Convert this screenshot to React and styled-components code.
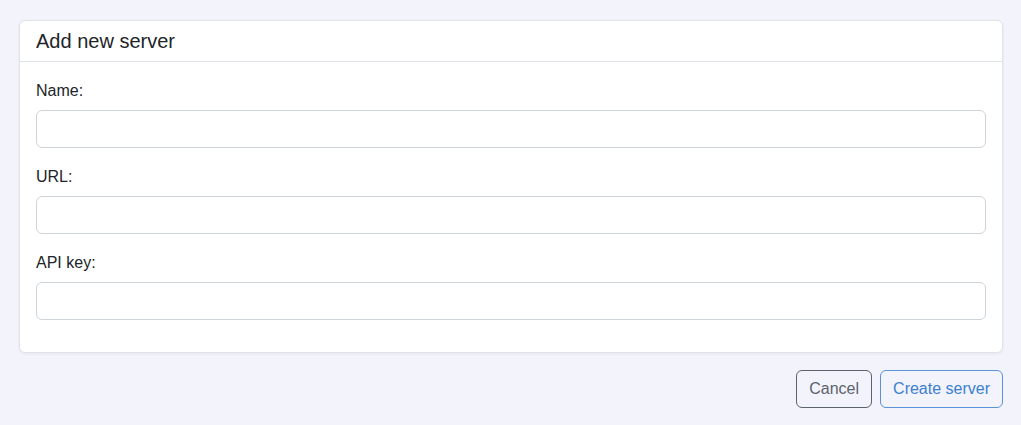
import React from "react";
import styled, { createGlobalStyle } from "styled-components";

const GlobalStyle = createGlobalStyle`
  html, body {
    margin: 0;
    padding: 0;
    background: #f3f3fc;
    font-family: "Liberation Sans", Arial, sans-serif;
    color: #212529;
  }
  * { box-sizing: border-box; }
`;

const Page = styled.div`
  padding: 20px 18px 18px 19px;
  display: flex;
  flex-direction: column;
  gap: 17px;
`;

const Card = styled.div`
  background: #fff;
  border: 1px solid #e1e2e8;
  border-radius: 6px;
  box-shadow: 0 1px 3px rgba(0, 0, 0, 0.06);
`;

const CardHeader = styled.div`
  height: 41px;
  padding: 0 16px;
  display: flex;
  align-items: center;
  border-bottom: 1px solid #dee2e6;
`;

const Title = styled.h2`
  margin: 0;
  font-size: 20px;
  font-weight: 400;
  color: #212529;
`;

const CardBody = styled.div`
  padding: 16px;
`;

const Field = styled.div`
  display: flex;
  flex-direction: column;
  gap: 8px;
  margin-bottom: 16px;
`;

const Label = styled.label`
  font-size: 16px;
  line-height: 24px;
  padding-top: 1px;
  color: #212529;
`;

const Input = styled.input`
  height: 38px;
  width: 100%;
  margin-top: -1px;
  border: 1px solid #ced4da;
  border-radius: 6px;
  padding: 6px 12px;
  font-size: 16px;
  font-family: inherit;
  background: #fff;
  outline: none;
`;

const Actions = styled.div`
  display: flex;
  justify-content: flex-end;
  gap: 8px;
`;

const Button = styled.button`
  height: 38px;
  padding: 0 12px;
  font-family: inherit;
  font-size: 16px;
  background: transparent;
  border-radius: 6px;
  border: 1px solid ${(p) => (p.$primary ? "#5b93d6" : "#5c636a")};
  color: ${(p) => (p.$primary ? "#3b7fcf" : "#5c636a")};
  cursor: pointer;
`;

const fields = [
  { id: "name", label: "Name:" },
  { id: "url", label: "URL:" },
  { id: "key", label: "API key:" },
];

export default function App() {
  return (
    <>
      <GlobalStyle />
      <Page>
        <Card>
          <CardHeader>
            <Title>Add new server</Title>
          </CardHeader>
          <CardBody>
            {fields.map((f) => (
              <Field key={f.id}>
                <Label htmlFor={f.id}>{f.label}</Label>
                <Input id={f.id} type="text" />
              </Field>
            ))}
          </CardBody>
        </Card>
        <Actions>
          <Button>Cancel</Button>
          <Button $primary>Create server</Button>
        </Actions>
      </Page>
    </>
  );
}
